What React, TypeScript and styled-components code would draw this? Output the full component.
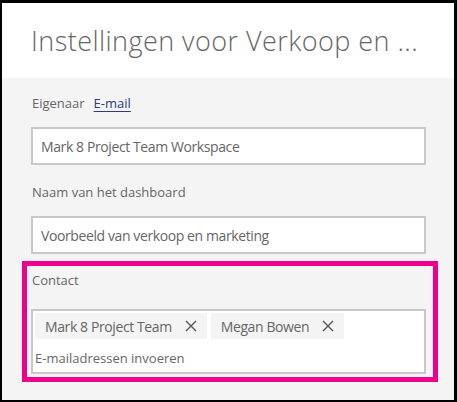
import React from "react";
import styled, { createGlobalStyle } from "styled-components";

const Global = createGlobalStyle`
  html, body { margin: 0; padding: 0; background: #000; }
  body { font-family: "Open Sans", "Noto Sans", sans-serif; }
  * { box-sizing: border-box; }
`;

const Frame = styled.div`
  width: 457px;
  height: 402px;
  border-top: 3px solid #000;
  border-left: 2px solid #000;
  border-right: 3px solid #000;
  border-bottom: 2px solid #000;
  background: #f4f4f4;
  display: flex;
  flex-direction: column;
  overflow: hidden;
`;

const Header = styled.header`
  height: 75px;
  background: #fff;
  display: flex;
  align-items: center;
  padding-left: 29px;
  flex-shrink: 0;
`;

const Title = styled.h1`
  margin: 0;
  font-size: 27px;
  font-weight: 300;
  letter-spacing: 0.45px;
  color: #666;
  white-space: nowrap;
`;

const Body = styled.div`
  padding: 15px 28px 0 29px;
  display: flex;
  flex-direction: column;
`;

const LabelRow = styled.div<{ $mt?: number }>`
  display: flex;
  align-items: baseline;
  gap: 9px;
  margin-top: ${(p) => p.$mt ?? 0}px;
  padding-left: 1px;
  font-size: 13px;
  line-height: 20px;
  color: #666;
`;

const Link = styled.a`
  color: #2b3990;
  text-decoration: underline;
  text-underline-offset: 3px;
`;

const Field = styled.div<{ $mt?: number }>`
  margin-top: ${(p) => p.$mt ?? 0}px;
  height: 38px;
  border: 2px solid #c8c8c8;
  background: #fff;
  display: flex;
  align-items: center;
  padding-left: 8px;
  font-size: 14px;
  letter-spacing: -0.4px;
  color: #666;
`;

const Highlight = styled.section`
  margin: 7px -12px 0 -9px;
  border: 5px solid #ec008c;
  padding: 4px 7px 3px 4px;
  display: flex;
  flex-direction: column;
`;

const PeopleBox = styled.div`
  margin-top: 19px;
  height: 65px;
  border: 2px solid #c8c8c8;
  background: #fff;
  padding: 2px 2px 0 2px;
  display: flex;
  flex-direction: column;
`;

const Chips = styled.div`
  display: flex;
  gap: 4px;
`;

const Chip = styled.div`
  height: 26px;
  background: #f4f4f4;
  display: flex;
  align-items: center;
  padding: 0 10px;
  gap: 13px;
  font-size: 14px;
  letter-spacing: -0.4px;
  color: #666;
`;

const Remove = styled.svg`
  width: 12px;
  height: 12px;
  flex-shrink: 0;
`;

const Placeholder = styled.div`
  margin-top: 9px;
  font-size: 13px;
  line-height: 20px;
  color: #666;
`;

const X = () => (
  <Remove viewBox="0 0 12 12">
    <path d="M1 1 L11 11 M11 1 L1 11" stroke="#555" strokeWidth="1.4" fill="none" />
  </Remove>
);

export default function App() {
  return (
    <>
      <Global />
      <Frame>
        <Header>
          <Title>Instellingen voor Verkoop en ...</Title>
        </Header>
        <Body>
          <LabelRow>
            <span>Eigenaar</span>
            <Link>E-mail</Link>
          </LabelRow>
          <Field $mt={14}>Mark 8 Project Team Workspace</Field>
          <LabelRow $mt={17}>Naam van het dashboard</LabelRow>
          <Field $mt={14}>Voorbeeld van verkoop en marketing</Field>
          <Highlight>
            <LabelRow>Contact</LabelRow>
            <PeopleBox>
              <Chips>
                <Chip>
                  Mark 8 Project Team
                  <X />
                </Chip>
                <Chip>
                  Megan Bowen
                  <X />
                </Chip>
              </Chips>
              <Placeholder>E-mailadressen invoeren</Placeholder>
            </PeopleBox>
          </Highlight>
        </Body>
      </Frame>
    </>
  );
}
